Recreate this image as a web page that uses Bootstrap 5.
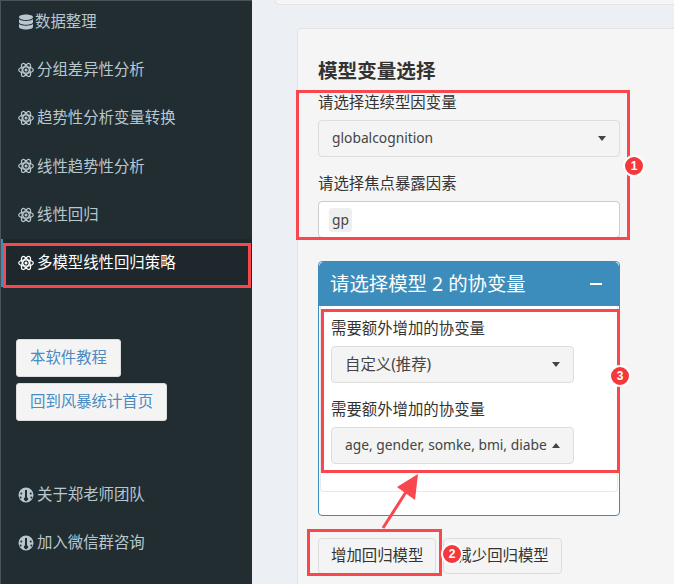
<!DOCTYPE html>
<html lang="zh"><head><meta charset="utf-8"><title>多模型线性回归策略</title>
<link href="https://cdn.jsdelivr.net/npm/bootstrap@5.3.0/dist/css/bootstrap.min.css" rel="stylesheet">
<style>
html,body{height:584px;overflow:hidden}
body{font-family:"Noto Sans","Noto Sans CJK SC",sans-serif;font-size:15.4px;background:#ecf0f5;color:#333;position:relative}
.shell{height:584px}
.side{width:252px;background:#222d32;border-left:1px solid #4a5357;border-top:1px solid #4a5357;flex:none;color:#b8c7ce}
.side-item{height:48.3px;display:flex;align-items:center;padding-left:17px;gap:3px;line-height:1;color:#b8c7ce}
.side-item svg{width:16px;height:16px;flex:none}
.side-item.first{height:44.6px;padding-bottom:3.600px;gap:1px}
.side-item.current{background:#1e282c;color:#fff;box-shadow:inset 2px 0 0 #3c8dbc}
.side-btns{padding:52.400px 0 0 15px;gap:6px}
.side-btn{background:#f4f4f4;border:1px solid #ddd;color:#4a8bc2;font-size:15.4px;padding:0 13px;height:38px;line-height:36px;border-radius:3px}
.side-low{margin-top:49px}
.stage{min-width:0;padding-left:23px;overflow:hidden}
.stub{height:5px;width:450px;background:#f5f5f5;border:1px solid #e3e3e3;border-top:0;border-radius:0 0 4px 4px}
.panel{width:430px;height:600px;margin:23px 0 0 22px;background:#f5f5f5;border:1px solid #e3e3e3;border-radius:4px;padding:28px 0 0 20px}
.panel-title{font-size:19.6px;font-weight:700;line-height:28px;margin:0 0 7px}
.field-label{display:block;line-height:21px;margin-bottom:7px}
.pick{width:302px;height:37px;border:1px solid #ddd;border-radius:4px;background:#f4f4f4;padding:0 13px 0 13px;font-size:13.8px;color:#444}
.pick.open-input{background:#fff;border-color:#ccc;padding-left:10px}
.tag{background:#efefef;border-radius:3px;padding:0 3px;height:24px;line-height:24px}
.pick+.field-label{margin-top:16px}
.caret{width:0;height:0;border-left:4.500px solid transparent;border-right:4.500px solid transparent;border-top:5px solid #444;flex:none}
.caret.up{border-top:0;border-bottom:5px solid #444}
.cov-card{width:302px;height:255px;margin-top:23px;border:1px solid #3c8dbc;border-radius:4px;background:#fff;overflow:hidden}
.cov-head{height:44px;background:#3c8dbc;color:#fff;font-size:19.4px;padding:0 17px 0 11px;border:0;border-radius:0}
.cov-minus{width:12px;height:2px;background:#fff}
.cov-inner{height:186px;margin:0 1px;border:1px solid #e8e8e8;border-top:0;border-radius:0 0 4px 4px;padding:12px 0 0 10px}
.cov-inner .pick{width:243px}
.cjk-text{font-size:15.4px}
.clip{overflow:hidden;white-space:nowrap;width:202px;display:block}
.act-row{margin-top:22px;gap:7px}
.act{background:#f4f4f4;border:1px solid #ddd;color:#333;font-size:15.4px;height:36px;padding:0 12px;line-height:34px;border-radius:4px}
.mark-box{position:absolute;border:3px solid #f9484d;pointer-events:none}
.mark-num{position:absolute;width:22px;height:22px;border-radius:50%;background:#f5383c;border:2px solid #fff;color:#fff;font-size:12px;font-weight:700;line-height:18px;text-align:center;font-family:"Liberation Sans",sans-serif}
.mark-arrow{position:absolute;left:370px;top:465px;width:60px;height:70px}
.m-a{left:3px;top:243px;width:248px;height:45px}
.m-b{left:296px;top:90px;width:334px;height:150px}
.m-c{left:321px;top:309px;width:299px;height:164px}
.m-d{left:307px;top:529px;width:135px;height:47px}
.n-a{left:623px;top:155px}
.n-b{left:441px;top:543px}
.n-c{left:609px;top:365px}
</style></head>
<body>
<svg width="0" height="0" class="d-none"><defs>
<symbol id="atom" viewBox="0 0 16 16"><g fill="none" stroke="currentColor" stroke-width="1.25"><ellipse cx="8" cy="8" rx="7.3" ry="3.200"/><ellipse cx="8" cy="8" rx="7.3" ry="3.200" transform="rotate(60 8 8)"/><ellipse cx="8" cy="8" rx="7.3" ry="3.200" transform="rotate(120 8 8)"/></g><circle cx="8" cy="8" r="1.5" fill="currentColor"/></symbol>
<symbol id="gauge" viewBox="0 0 16 16"><path fill="currentColor" fill-rule="evenodd" d="M8 .5a7.5 7.5 0 1 1 0 15 7.5 7.5 0 0 1 0-15zM7 3v7.2a2 2 0 1 0 2 0V3zM3.3 5.6a1 1 0 1 0 0 2 1 1 0 0 0 0-2zM12.7 5.6a1 1 0 1 0 0 2 1 1 0 0 0 0-2zM2.6 9.4a1 1 0 1 0 0 2 1 1 0 0 0 0-2zM13.4 9.4a1 1 0 1 0 0 2 1 1 0 0 0 0-2z"/></symbol>
</defs></svg>
<div class="shell d-flex">
<aside class="side d-flex flex-column">
<div class="side-item first"><svg viewBox="0 0 16 16"><path fill="currentColor" d="M8 .6c3.800 0 7 1 7 2.600S11.800 5.900 8 5.900 1 4.800 1 3.200 4.200.6 8 .6zM1 5.200c1.300 1.200 4 1.700 7 1.700s5.700-.5 7-1.700v3c0 1.500-3.200 2.500-7 2.500s-7-1-7-2.500zM1 10c1.300 1.200 4 1.700 7 1.700s5.700-.5 7-1.700v3c0 1.500-3.200 2.500-7 2.500s-7-1-7-2.500z"/></svg>数据整理</div>
<div class="side-item"><svg><use href="#atom"/></svg><span>分组差异性分析</span></div>
<div class="side-item"><svg><use href="#atom"/></svg><span>趋势性分析变量转换</span></div>
<div class="side-item"><svg><use href="#atom"/></svg><span>线性趋势性分析</span></div>
<div class="side-item"><svg><use href="#atom"/></svg><span>线性回归</span></div>
<div class="side-item current"><svg><use href="#atom"/></svg><span>多模型线性回归策略</span></div>
<div class="side-btns d-flex flex-column align-items-start">
<a class="btn side-btn" href="#">本软件教程</a>
<a class="btn side-btn" href="#">回到风暴统计首页</a>
</div>
<div class="side-low">
<div class="side-item"><svg><use href="#gauge"/></svg><span>关于郑老师团队</span></div>
<div class="side-item"><svg><use href="#gauge"/></svg><span>加入微信群咨询</span></div>
</div>
</aside>
<main class="stage flex-grow-1">
<div class="stub"></div>
<section class="panel">
<h4 class="panel-title">模型变量选择</h4>
<label class="field-label">请选择连续型因变量</label>
<div class="pick d-flex align-items-center justify-content-between"><span>globalcognition</span><i class="caret"></i></div>
<label class="field-label">请选择焦点暴露因素</label>
<div class="pick open-input d-flex align-items-center"><span class="tag">gp</span></div>
<div class="card cov-card">
<div class="card-header cov-head d-flex align-items-center justify-content-between"><span>请选择模型 2 的协变量</span><i class="cov-minus"></i></div>
<div class="cov-inner">
<label class="field-label">需要额外增加的协变量</label>
<div class="pick d-flex align-items-center justify-content-between"><span class="cjk-text">自定义(推荐)</span><i class="caret"></i></div>
<label class="field-label">需要额外增加的协变量</label>
<div class="pick d-flex align-items-center justify-content-between"><span class="clip">age, gender, somke, bmi, diabetes</span><i class="caret up"></i></div>
</div>
</div>
<div class="act-row d-flex">
<button class="btn act" type="button">增加回归模型</button>
<button class="btn act" type="button">减少回归模型</button>
</div>
</section>
</main>
</div>
<div class="mark-box m-a"></div>
<div class="mark-box m-b"></div>
<div class="mark-box m-c"></div>
<div class="mark-box m-d"></div>
<svg class="mark-arrow" viewBox="0 0 60 70"><path d="M13 63L36 27" stroke="#f9484d" stroke-width="3" fill="none"/><path d="M48 9L27 22 45 35z" fill="#f9484d"/></svg>
<span class="mark-num n-a">1</span>
<span class="mark-num n-b">2</span>
<span class="mark-num n-c">3</span>
</body></html>
